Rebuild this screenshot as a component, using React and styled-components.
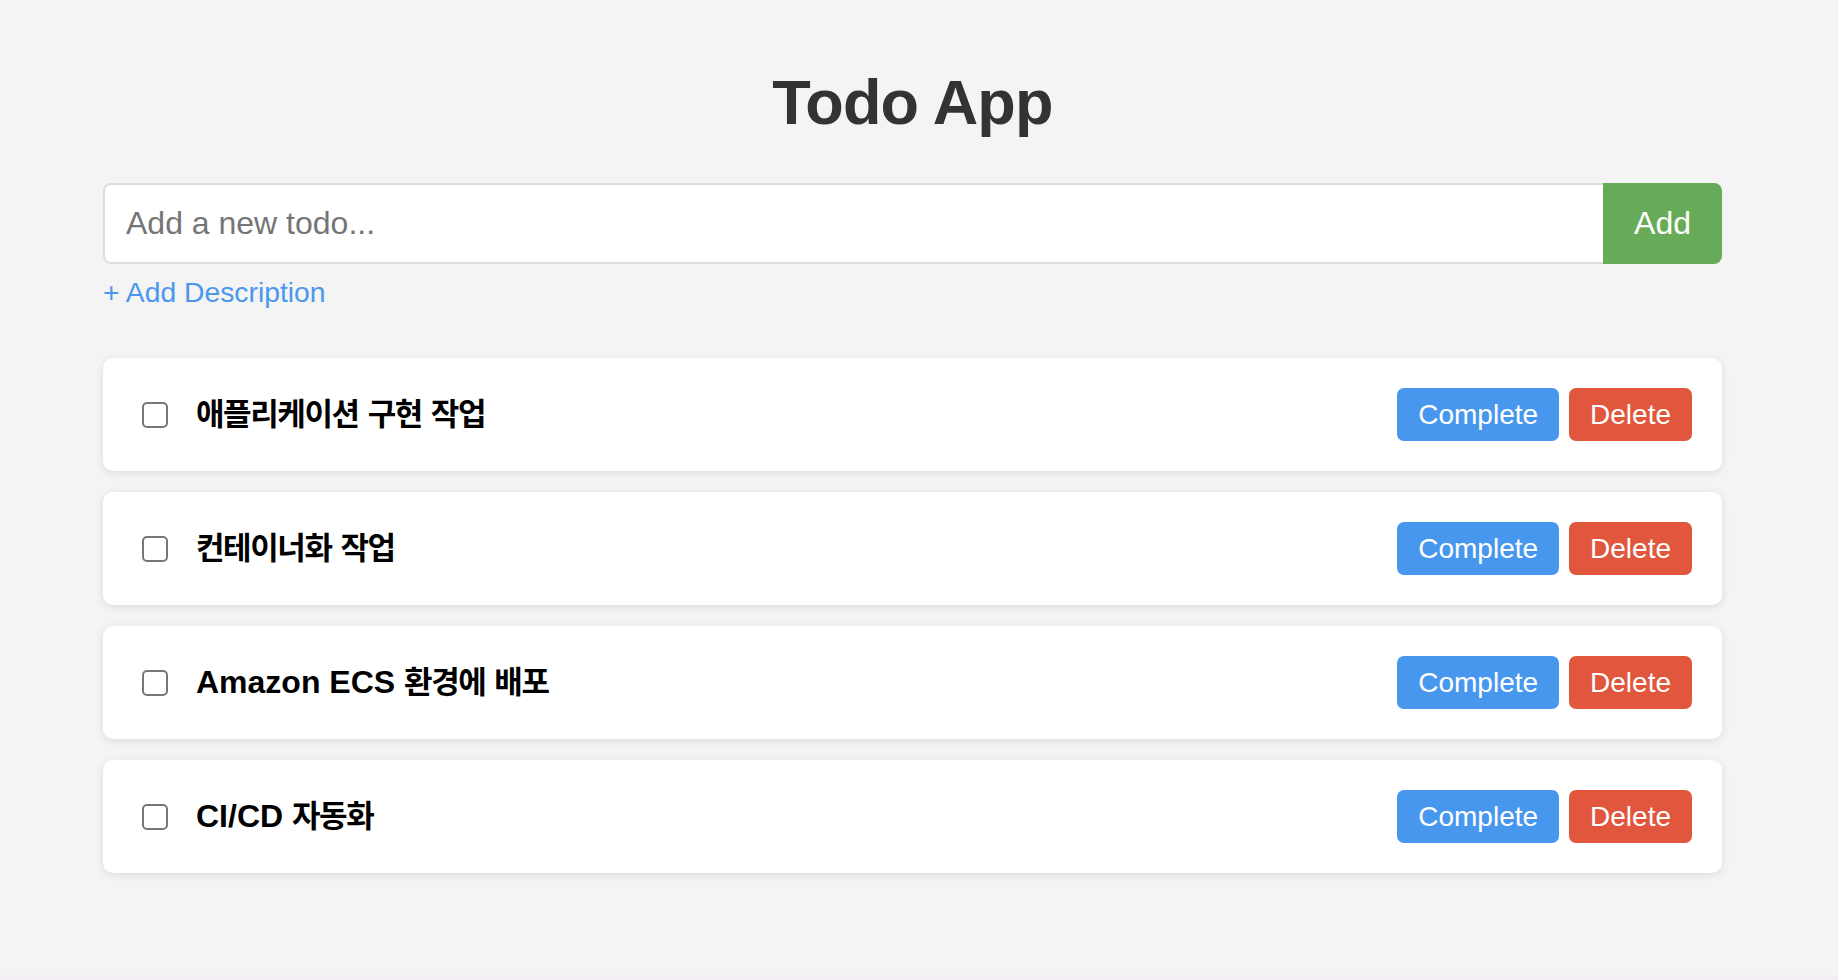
import React from "react";
import styled, { createGlobalStyle } from "styled-components";

const Global = createGlobalStyle`
  html { background: #f3eef5; }
  body {
    margin: 0;
    font-family: "Liberation Sans", Arial, "Noto Sans CJK KR", sans-serif;
  }
  * { box-sizing: border-box; }
`;

const Page = styled.div`
  min-height: 975px;
  background: #f4f4f4;
  padding: 65px 116px 0 103px;
`;

const Title = styled.h1`
  margin: 0 0 44px;
  text-align: center;
  font-size: 63px;
  line-height: 74px;
  font-weight: 700;
  letter-spacing: -0.8px;
  color: #333;
`;

const Form = styled.form`
  display: flex;
  align-items: stretch;
  margin: 0;
`;

const Input = styled.input`
  flex: 1;
  min-width: 0;
  height: 81px;
  padding: 0 21px;
  font-family: "Liberation Sans", Arial, sans-serif;
  font-size: 32px;
  color: #333;
  background: #fff;
  border: 2px solid #dddddd;
  border-right: none;
  border-radius: 8px 0 0 8px;
  outline: none;
  &::placeholder { color: #757575; }
`;

const AddButton = styled.button`
  width: 119px;
  border: none;
  border-radius: 0 8px 8px 0;
  background: #67ab58;
  color: #fff;
  font-family: "Liberation Sans", Arial, sans-serif;
  font-size: 32px;
  cursor: pointer;
`;

const DescLink = styled.button`
  display: block;
  margin-top: 12px;
  padding: 0;
  border: none;
  background: none;
  color: #4a98ee;
  font-family: "Liberation Sans", Arial, sans-serif;
  font-size: 28.3px;
  line-height: 32px;
  cursor: pointer;
`;

const List = styled.ul`
  list-style: none;
  margin: 50px 0 0;
  padding: 0;
  display: flex;
  flex-direction: column;
  gap: 21px;
`;

const Card = styled.li`
  display: flex;
  align-items: center;
  padding: 30px;
  background: #fff;
  border-radius: 10px;
  box-shadow: 0 2px 8px rgba(0, 0, 0, 0.1);
`;

const Check = styled.input.attrs({ type: "checkbox" })`
  appearance: none;
  flex: none;
  width: 26px;
  height: 26px;
  margin: 0 28px 0 9px;
  border: 2px solid #777;
  border-radius: 5px;
  background: #fff;
`;

const Text = styled.span`
  flex: 1;
  font-family: "Liberation Sans", Arial, "Noto Sans CJK KR", sans-serif;
  font-size: 32px;
  line-height: 40px;
  font-weight: 700;
  color: #000;
  white-space: nowrap;
  transform: translateY(-2px);
`;

const Hangul = styled.span`
  font-family: "Noto Sans CJK KR", sans-serif;
  font-size: 31px;
  letter-spacing: -1.4px;
`;

const Actions = styled.div`
  display: flex;
  gap: 10px;
`;

const ActionButton = styled.button`
  padding: 10px 21px;
  border: none;
  border-radius: 7px;
  background: ${(p) => p.$bg};
  color: #fff;
  font-family: "Liberation Sans", Arial, sans-serif;
  font-size: 28px;
  line-height: 33px;
  cursor: pointer;
`;

const renderText = (s) =>
  s.split(/([\uAC00-\uD7A3]+)/).map((part, i) =>
    /[\uAC00-\uD7A3]/.test(part) ? <Hangul key={i}>{part}</Hangul> : part
  );

const todos = [
  "애플리케이션 구현 작업",
  "컨테이너화 작업",
  "Amazon ECS 환경에 배포",
  "CI/CD 자동화",
];

export default function App() {
  return (
    <>
      <Global />
      <Page>
        <Title>Todo App</Title>
        <Form onSubmit={(e) => e.preventDefault()}>
          <Input placeholder="Add a new todo..." />
          <AddButton type="submit">Add</AddButton>
        </Form>
        <DescLink type="button">+ Add Description</DescLink>
        <List>
          {todos.map((t) => (
            <Card key={t}>
              <Check />
              <Text>{renderText(t)}</Text>
              <Actions>
                <ActionButton $bg="#4897ef">Complete</ActionButton>
                <ActionButton $bg="#e0573e">Delete</ActionButton>
              </Actions>
            </Card>
          ))}
        </List>
      </Page>
    </>
  );
}
